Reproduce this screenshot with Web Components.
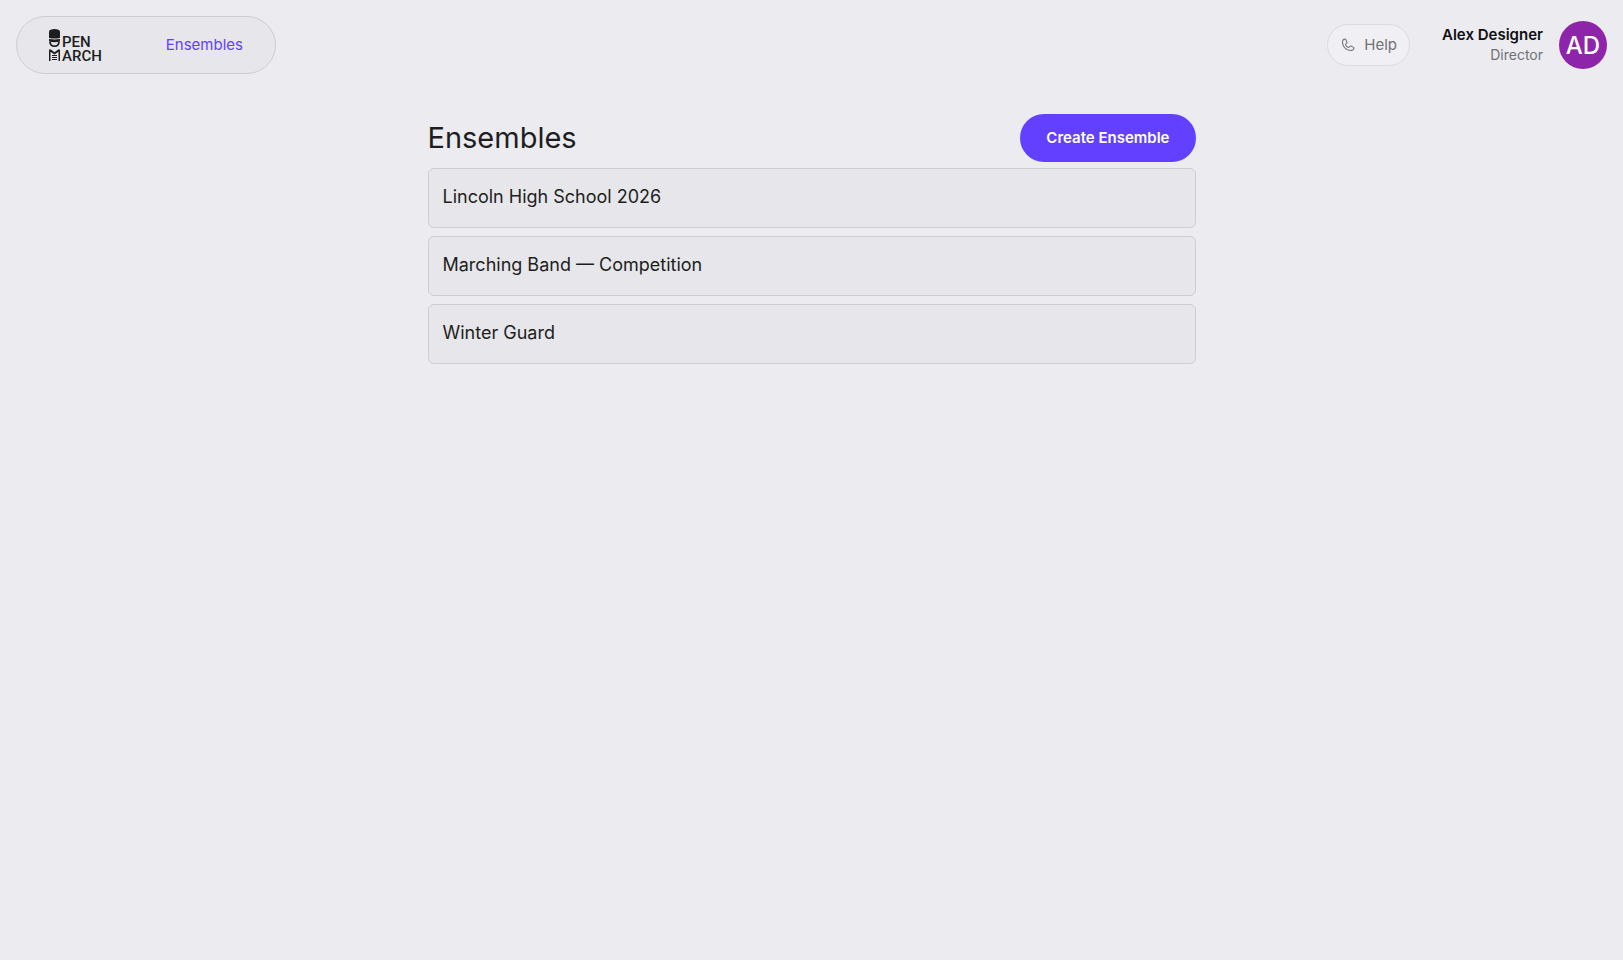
<!DOCTYPE html>
<html lang="en">
<head>
<meta charset="utf-8">
<meta name="viewport" content="width=device-width, initial-scale=1">
<title>Ensembles</title>
<style>
  :root {
    --bg: #ebebf0;
    --surface: #e6e6eb;
    --raised: #f0f0f4;
    --stroke: #cdcdd2;
    --ink: #1e1e20;
    --muted: #717175;
    --accent: #6340ff;
    --avatar: #8e24aa;
  }
  body {
    margin: 0;
    min-height: 100vh;
    background: var(--bg);
    color: var(--ink);
    font-family: Inter, "Liberation Sans", sans-serif;
  }
</style>
</head>
<body>
<app-shell>
  <top-bar slot="header">
    <nav-pill slot="start"><nav-link href="#ensembles">Ensembles</nav-link></nav-pill>
    <help-button slot="end">Help</help-button>
    <user-badge slot="end" initials="AD"><span slot="name">Alex Designer</span><span slot="role">Director</span></user-badge>
  </top-bar>
  <ensemble-page>
    <span slot="title">Ensembles</span>
    <primary-button slot="action">Create Ensemble</primary-button>
    <ensemble-card href="#lincoln">Lincoln High School 2026</ensemble-card>
    <ensemble-card href="#marching">Marching Band — Competition</ensemble-card>
    <ensemble-card href="#guard">Winter Guard</ensemble-card>
  </ensemble-page>
</app-shell>

<script>
  const define = (name, render) =>
    customElements.define(name, class extends HTMLElement {
      constructor() {
        super();
        this.attachShadow({ mode: "open" });
      }
      connectedCallback() {
        this.shadowRoot.innerHTML = render(this);
      }
    });

  define("app-shell", () => `
    <style>
      :host { display: block; }
      main { padding: 24px 16px; }
    </style>
    <slot name="header"></slot>
    <main><slot></slot></main>`);

  define("top-bar", () => `
    <style>
      :host { display: block; }
      header { display: flex; justify-content: space-between; align-items: center; padding: 16px; }
      .group { display: flex; align-items: center; gap: 32px; }
    </style>
    <header>
      <slot name="start"></slot>
      <div class="group"><slot name="end"></slot></div>
    </header>`);

  define("nav-pill", () => `
    <style>
      :host { display: block; }
      nav {
        display: flex; align-items: center; gap: 64px; box-sizing: border-box; height: 58px;
        padding: 0 32px; border: 1px solid var(--stroke); border-radius: 29px; background: var(--surface);
      }
    </style>
    <nav aria-label="Main"><brand-logo></brand-logo><slot></slot></nav>`);

  define("brand-logo", () => `
    <style>
      :host { display: block; }
      a {
        display: grid; grid-template-columns: 11px 1fr; column-gap: 2px; align-items: end;
        color: var(--ink); text-decoration: none;
      }
      svg { display: block; }
      .words { font: 500 15px/14px Roboto, sans-serif; margin-bottom: -2px; }
    </style>
    <a href="#home" title="OpenMarch">
      <svg width="11" height="32" viewBox="0 0 11 32" fill="currentColor" aria-hidden="true">
        <path d="M0 3Q0 1.400 1.600.8Q5.500-.6 9.400.8Q11 1.400 11 3V8.200Q11 9.100 9.900 9.300Q5.500 9.900 1.100 9.300Q0 9.100 0 8.200Z"/>
        <path d="M0 10.100Q5.500 11 11 10.100V12Q9.500 13.300 5.500 13.300Q1.500 13.300 0 12Z"/>
        <path d="M.9 12.500C1.200 16 3.200 17.200 5.500 17.200S9.800 16 10.100 12.500" fill="none" stroke="currentColor" stroke-width="1.800"/>
        <path d="M0 20.500H1.800L5.500 23.200L9.200 20.500H11V32H9.500V22.800L5.500 25.500L1.500 22.800V32H0Z"/>
        <path d="M3 26H8V27H3ZM3 28H8V29H3ZM3 30H8V31H3Z"/>
      </svg>
      <span class="words">PEN<br>ARCH</span>
    </a>`);

  define("nav-link", el => `
    <style>
      :host { display: block; }
      a { color: var(--accent); text-decoration: none; font-size: 15px; line-height: 24px; }
    </style>
    <a href="${el.getAttribute("href")}" aria-current="page"><slot></slot></a>`);

  define("help-button", () => `
    <style>
      :host { display: block; }
      button {
        display: flex; align-items: center; gap: 8px; box-sizing: border-box; height: 42px; padding: 0 12px;
        border: 1px solid #dcdce0; border-radius: 21px; background: var(--raised); color: var(--muted);
        font: 15px/24px Inter, "Liberation Sans", sans-serif;
      }
      svg { display: block; }
    </style>
    <button type="button">
      <svg width="16" height="16" viewBox="0 0 256 256" fill="currentColor" aria-hidden="true"><path d="M222.370 158.460l-47.110-21.110-.13-.06a16 16 0 0 0-15.170 1.400 8.120 8.120 0 0 0-.75.560L134.870 160c-15.420-7.490-31.340-23.290-38.830-38.510l20.780-24.710c.2-.25.390-.5.570-.77a16 16 0 0 0 1.320-15.060l0-.12L97.540 33.640a16 16 0 0 0-16.620-9.520A56.260 56.260 0 0 0 32 80c0 79.400 64.600 144 144 144a56.260 56.260 0 0 0 55.880-48.920 16 16 0 0 0-9.510-16.620ZM176 208A128.140 128.140 0 0 1 48 80 40.200 40.200 0 0 1 82.870 40l0 .12 21 47L83.200 111.860a6.130 6.130 0 0 0-.57.770 16 16 0 0 0-1 15.700c9.060 18.530 27.730 37.060 46.460 46.110a16 16 0 0 0 15.750-1.140 8.440 8.440 0 0 0 .74-.56L168.890 152l47 21.050.11 0A40.210 40.210 0 0 1 176 208Z"/></svg>
      <slot></slot>
    </button>`);

  define("user-badge", el => `
    <style>
      :host { display: flex; align-items: center; gap: 16px; }
      .who { display: grid; text-align: right; }
      .name { color: #101012; font-size: 15px; line-height: 20px; font-weight: 600; }
      .role { color: var(--muted); font-size: 14px; line-height: 20px; }
      .avatar {
        display: grid; place-items: center; width: 48px; height: 48px; border-radius: 50%;
        background: var(--avatar); color: #fff; font-size: 24px; font-weight: 500;
      }
    </style>
    <div class="who">
      <span class="name"><slot name="name"></slot></span>
      <span class="role"><slot name="role"></slot></span>
    </div>
    <div class="avatar">${el.getAttribute("initials")}</div>`);

  define("primary-button", () => `
    <style>
      :host { display: block; }
      button {
        display: block; height: 48px; padding: 0 26px; border: 0; border-radius: 24px;
        background: var(--accent); color: #fff; font: 600 15px/24px Inter, "Liberation Sans", sans-serif;
      }
    </style>
    <button type="button"><slot></slot></button>`);

  define("ensemble-page", () => `
    <style>
      :host { display: block; max-width: 768px; margin: 0 auto; }
      .head { display: flex; justify-content: space-between; align-items: center; margin-bottom: 6px; }
      h1 { margin: 0; font-size: 29px; line-height: 40px; font-weight: 400; }
      .list { display: grid; gap: 8px; }
    </style>
    <div class="head">
      <h1><slot name="title"></slot></h1>
      <slot name="action"></slot>
    </div>
    <div class="list"><slot></slot></div>`);

  define("ensemble-card", el => `
    <style>
      :host { display: block; }
      a {
        display: block; box-sizing: border-box; height: 60px; padding: 14px; border: 1px solid var(--stroke);
        border-radius: 6px; background: var(--surface); color: var(--ink); text-decoration: none;
        font-size: 18px; line-height: 28px;
      }
    </style>
    <a href="${el.getAttribute("href")}"><slot></slot></a>`);
</script>
</body>
</html>
